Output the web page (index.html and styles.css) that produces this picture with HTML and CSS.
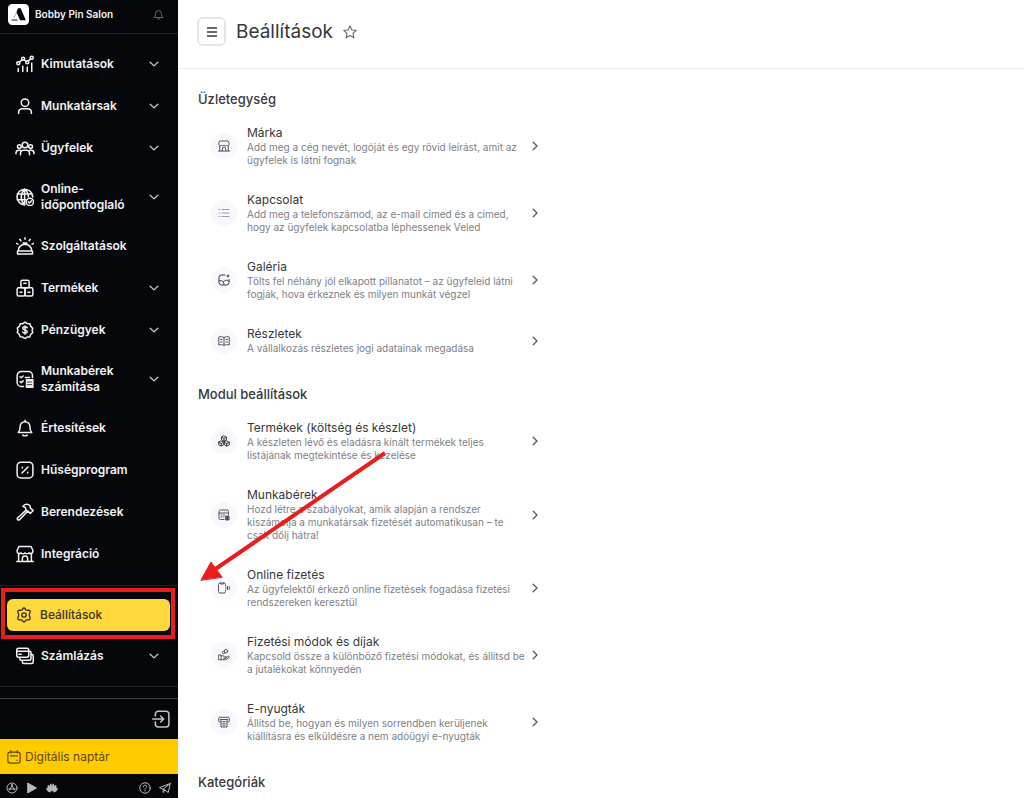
FILE: index.html
```html
<!DOCTYPE html>
<html lang="hu">
<head>
<meta charset="UTF-8">
<meta name="viewport" content="width=device-width, initial-scale=1.0">
<title>Beállítások</title>
<link rel="stylesheet" href="styles.css">
</head>
<body>
<!-- shared shapes -->
<svg class="defs" aria-hidden="true">
  <symbol id="down" viewBox="0 0 10 10"><path d="M1.2 3.2 5 6.9l3.8-3.7"/></symbol>
  <symbol id="right" viewBox="0 0 10 10"><path d="M3.2 1.3 7 5 3.2 8.7"/></symbol>
  <symbol id="shop" viewBox="0 0 24 24"><path d="M4 2h16l2.500 5v2a3.100 3.100 0 0 1-5.200 1.500 3.500 3.500 0 0 1-5.300 0 3.500 3.500 0 0 1-5.300 0A3.100 3.100 0 0 1 1.500 9V7zM3.500 12v10M20.500 12v10M1 22h22M8.500 22v-4a3.500 3.500 0 0 1 7 0v4"/></symbol>
</svg>

<aside class="sidebar">
  <div class="brand">
    <svg class="logo" viewBox="0 0 20 20"><rect width="20" height="20" rx="4" fill="#fff"/><path d="M9.500 4h2.500l5 11.500h-5.500L8 7.500z" fill="#08080c"/><path d="M3.500 14.500h5.500V16H3.500z" fill="#6b6b70"/><path d="M8 8.500 5.500 13" stroke="#b5b5ba"/></svg>
    <span class="brand-name">Bobby Pin Salon</span>
    <button class="bell" aria-label="Értesítések"><svg class="icon" viewBox="0 0 24 24"><path d="M3 18c2-2 2.500-4 2.500-8a6.500 6.500 0 0 1 13 0c0 4 .5 6 2.500 8zM9 21c1.500 1.800 4.500 1.800 6 0"/></svg></button>
  </div>

  <nav class="menu">
    <button class="item">
      <svg class="icon" viewBox="0 0 24 24"><path d="M3 22v-4M9 22v-7M15 22v-6M21 22V11M4.500 9.500l3.500-3M11 6.500l2.500 2M16.500 8l3-3"/><circle cx="3" cy="11" r="2"/><circle cx="9.500" cy="5" r="2"/><circle cx="15" cy="9.500" r="2"/><circle cx="21" cy="3.500" r="2"/></svg>
      <span>Kimutatások</span><svg class="chevron"><use href="#down"/></svg>
    </button>
    <button class="item">
      <svg class="icon" viewBox="0 0 24 24"><circle cx="12" cy="7.500" r="5"/><path d="M3.500 22v-1.500c0-3 2-5 5-5h7c3 0 5 2 5 5V22"/></svg>
      <span>Munkatársak</span><svg class="chevron"><use href="#down"/></svg>
    </button>
    <button class="item">
      <svg class="icon wide" viewBox="0 0 24 24"><circle cx="12" cy="8" r="3.800"/><circle cx="4.500" cy="10" r="2.500"/><circle cx="19.500" cy="10" r="2.500"/><path d="M6 21v-2c0-2.500 1.500-4 4-4h4c2.500 0 4 1.500 4 4v2M0 19.500v-1c0-2 1.500-3.500 4-3.500h1.500M24 19.500v-1c0-2-1.500-3.500-4-3.500h-1.500"/></svg>
      <span>Ügyfelek</span><svg class="chevron"><use href="#down"/></svg>
    </button>
    <button class="item tall">
      <svg class="icon" viewBox="0 0 24 24"><path d="M12 22.500A10.500 10.500 0 1 1 22.300 12M11.500 1.500c-6 6-6 15 0 21M11.500 1.500c3.500 3 5 6.500 5 10.500M1.500 8h20M1.500 15.500H13M11.500 1.500v21"/><circle cx="18.500" cy="18.500" r="4.800"/><path d="m16.500 18.500 1.500 1.500 2.800-3"/></svg>
      <span>Online-időpontfoglaló</span><svg class="chevron"><use href="#down"/></svg>
    </button>
    <a class="item" href="#">
      <svg class="icon" viewBox="0 0 24 24"><path d="M3 18.500a9 9 0 0 1 18 0zM2 19v3.500h20V19M9.500 8h5M12 8v2M12 1v2M5 3l1.500 2M19 3l-1.500 2M.5 8.500l2 1M23.500 8.500l-2 1"/></svg>
      <span>Szolgáltatások</span>
    </a>
    <button class="item">
      <svg class="icon" viewBox="0 0 24 24"><rect x="6.500" y="1.500" width="11" height="10" rx="2"/><rect x="1.500" y="11.500" width="10.500" height="11" rx="2"/><rect x="12" y="11.500" width="10.500" height="11" rx="2"/><path d="M10.500 5.500h3M5.500 17.500H8M16 17.500h2.500"/></svg>
      <span>Termékek</span><svg class="chevron"><use href="#down"/></svg>
    </button>
    <button class="item">
      <svg class="icon" viewBox="0 0 24 24"><path d="m12 1.500 3 2 3.500.3 1.200 3.400 2.600 2.500-.8 2.800.8 3-2.800 2.500-1.200 3.200-3.500.2-2.800 2-3-2-3.500-.3-1.200-3.400-2.600-2.400.8-3-.8-2.800 2.800-2.500 1.200-3.200 3.500-.2z"/><path d="M15 9c-1-1.700-6-1.800-6 .7 0 2.800 6 1.500 6 4.500 0 2.500-5 2.500-6 .5M12 6.500v11"/></svg>
      <span>Pénzügyek</span><svg class="chevron"><use href="#down"/></svg>
    </button>
    <button class="item tall">
      <svg class="icon" viewBox="0 0 24 24"><path d="M10 22H7a5.500 5.500 0 0 1-5.500-5.500v-9A5.500 5.500 0 0 1 7 2h9.500A5.500 5.500 0 0 1 22 7.500V10M5.500 9l1.500 1.300L9.500 8M5.500 15.500 7 16.800l2.500-2.300M12.500 10H18"/><path d="M14 13h8.500v10H14z" fill="currentColor"/><path class="cut" d="M15 16h6M15 19.500h6"/></svg>
      <span>Munkabérek számítása</span><svg class="chevron"><use href="#down"/></svg>
    </button>
    <a class="item" href="#">
      <svg class="icon" viewBox="0 0 24 24"><path d="M3 18c2-2 2.500-4 2.500-8a6.500 6.500 0 0 1 13 0c0 4 .5 6 2.500 8zM9 21.500c1.500 1.300 4.500 1.300 6 0M12 1.500v2"/></svg>
      <span>Értesítések</span>
    </a>
    <a class="item" href="#">
      <svg class="icon" viewBox="0 0 24 24"><rect x="1.500" y="1.500" width="21" height="21" rx="5"/><path d="m8 16 8-8M8.500 8.200v1M15.500 15v1"/></svg>
      <span>Hűségprogram</span>
    </a>
    <a class="item" href="#">
      <svg class="icon" viewBox="0 0 24 24"><path d="M13.500 9.500 2 20c-1 1.500.8 3.500 2.500 2.500L15.500 11M9 4.500c3-3.500 7-3.500 9.500-1l.5 3 4 3.500-4 4-3.500-3.500-2-1-1-3.500z"/></svg>
      <span>Berendezések</span>
    </a>
    <a class="item" href="#">
      <svg class="icon"><use href="#shop"/></svg>
      <span>Integráció</span>
    </a>
  </nav>

  <nav class="menu-bottom">
    <div class="highlight">
      <a class="item active" href="#" aria-current="page">
        <svg class="icon" viewBox="0 0 24 24"><path d="M12 1.500c2 0 2 2.500 4 3.300 1.800.6 3.800-.8 5 .9 1.200 2-1 3.500-1 6.300s2.200 4.300 1 6.300c-1.200 1.700-3.200.3-5 .9-2 .8-2 3.300-4 3.300s-2-2.500-4-3.300c-1.800-.6-3.800.8-5-.9-1.200-2 1-3.500 1-6.300s-2.200-4.300-1-6.300c1.200-1.700 3.200-.3 5-.9 2-.8 2-3.300 4-3.300z"/><circle cx="12" cy="12" r="3.300"/></svg>
        <span>Beállítások</span>
      </a>
    </div>
    <button class="item short">
      <svg class="icon" viewBox="0 0 24 24"><rect x="1" y="1.500" width="16" height="12" rx="2.500"/><path d="M1 5.500h16M4 9.500h3M5 14v1.500a2 2 0 0 0 2 2h11a2 2 0 0 0 2-2v-8a2 2 0 0 0-2-2M8.500 18v2a2 2 0 0 0 2 2H21a2 2 0 0 0 2-2v-8a2 2 0 0 0-2-2"/></svg>
      <span>Számlázás</span><svg class="chevron"><use href="#down"/></svg>
    </button>
  </nav>

  <div class="logout">
    <button aria-label="Kijelentkezés"><svg class="icon" viewBox="0 0 24 24"><path d="M4.500 8V5.500a4 4 0 0 1 4-4h10a4 4 0 0 1 4 4v13a4 4 0 0 1-4 4h-10a4 4 0 0 1-4-4V16M1 12h14M11.500 8l4 4-4 4"/></svg></button>
  </div>

  <a class="calendar" href="#">
    <svg class="icon" viewBox="0 0 24 24"><rect x="1.500" y="3.500" width="21" height="19" rx="4"/><path d="M6.500 1v4M17.500 1v4M6 10h12M17 17.500h1"/></svg>
    <span>Digitális naptár</span>
  </a>

  <div class="links">
    <a href="#" aria-label="App Store"><svg class="icon" viewBox="0 0 24 24"><circle cx="12" cy="12" r="10"/><path d="m13 5-6 11M11 5l6 11M5.500 14h13"/></svg></a>
    <a href="#" aria-label="Google Play"><svg class="icon" viewBox="0 0 24 24"><path d="M4 2.500 21 12 4 21.500z" fill="currentColor"/></svg></a>
    <a href="#" aria-label="AppGallery"><svg class="icon" viewBox="0 0 24 24"><path fill="currentColor" stroke="none" d="M11.700 19C7 14 6 6 9.500 3c3 1 3 9 2.200 16zM12.300 19C17 14 18 6 14.500 3c-3 1-3 9-2.200 16zM10.500 19.500C4 16 1.500 10 4 5.500 8 7 9.500 13 10.500 19.500zM13.500 19.500c6.500-3.500 9-9.500 6.500-14-4 1.500-5.500 7.500-6.500 14zM9.500 20.500c-5 1-9-3-9-9 4 0 7 4 9 9zM14.500 20.500c5 1 9-3 9-9-4 0-7 4-9 9z"/></svg></a>
    <a class="help" href="#" aria-label="Súgó"><svg class="icon" viewBox="0 0 24 24"><circle cx="12" cy="12" r="10.500"/><path d="M8.500 9.500c0-4.500 7-4 7-.3 0 2.300-3.500 2.300-3.500 5M12 17v1"/></svg></a>
    <a href="#" aria-label="Telegram"><svg class="icon" viewBox="0 0 24 24"><path d="M1.500 11 22.500 3l-4 18-7-5zM22.500 3l-14 11v7l3-5"/></svg></a>
  </div>
</aside>

<main class="content">
  <header class="topbar">
    <button class="burger" aria-label="Menü"><svg class="icon" viewBox="0 0 12 12"><path d="M1 2h10M1 6h10M1 10h10"/></svg></button>
    <h1>Beállítások</h1>
    <button class="star" aria-label="Kedvencekhez"><svg class="icon" viewBox="0 0 24 24"><path d="m12 1.500 3.200 7 7.500.8-5.600 5.100 1.600 7.600-6.700-3.900L5.300 22l1.600-7.600L1.300 9.300l7.500-.8z"/></svg></button>
  </header>

  <section class="group">
    <h2>Üzletegység</h2>
    <a class="row" href="#">
      <span class="round"><svg class="icon"><use href="#shop"/></svg></span>
      <span class="text"><strong>Márka</strong><small>Add meg a cég nevét, logóját és egy rövid leírást, amit az ügyfelek is látni fognak</small></span>
      <svg class="chevron"><use href="#right"/></svg>
    </a>
    <a class="row" href="#">
      <span class="round"><svg class="icon light" viewBox="0 0 24 24"><path d="M2 5h2M2 12h2M2 19h2M8 5h14M8 12h14M8 19h14"/></svg></span>
      <span class="text"><strong>Kapcsolat</strong><small>Add meg a telefonszámod, az e-mail címed és a címed, hogy az ügyfelek kapcsolatba léphessenek Veled</small></span>
      <svg class="chevron"><use href="#right"/></svg>
    </a>
    <a class="row" href="#">
      <span class="round"><svg class="icon bold" viewBox="0 0 24 24"><path d="M14 2H7a5 5 0 0 0-5 5v10a5 5 0 0 0 5 5h10a5 5 0 0 0 5-5v-6M2 14c5-3 9 0 10 7M11 16c2-4 7-5 11-2M20 2v4M18 4h4"/></svg></span>
      <span class="text"><strong>Galéria</strong><small>Tölts fel néhány jól elkapott pillanatot – az ügyfeleid látni fogják, hova érkeznek és milyen munkát végzel</small></span>
      <svg class="chevron"><use href="#right"/></svg>
    </a>
    <a class="row" href="#">
      <span class="round"><svg class="icon" viewBox="0 0 24 24"><path d="M12 5C9 3 5 3 1.500 4v16c3.500-1 7.500-1 10.500 1 3-2 7-2 10.500-1V4C19 3 15 3 12 5zM12 5v16M5 9h3M5 14h3M16 9h3M16 14h3"/></svg></span>
      <span class="text"><strong>Részletek</strong><small>A vállalkozás részletes jogi adatainak megadása</small></span>
      <svg class="chevron"><use href="#right"/></svg>
    </a>
  </section>

  <section class="group">
    <h2>Modul beállítások</h2>
    <a class="row" href="#">
      <span class="round"><svg class="icon bold" viewBox="0 0 24 24"><path d="m12 2 5 2.500v5L12 12 7 9.500v-5zM6.500 12l5 2.500v5l-5 2.500-5-2.500v-5zM17.500 12l5 2.500v5l-5 2.500-5-2.500v-5zM7 4.500l5 2.500 5-2.500M12 7v5M1.500 14.500l5 2.500 5-2.500M6.500 17v5M12.500 14.500l5 2.500 5-2.500M17.500 17v5"/></svg></span>
      <span class="text"><strong>Termékek (költség és készlet)</strong><small>A készleten lévő és eladásra kínált termékek teljes listájának megtekintése és kezelése</small></span>
      <svg class="chevron"><use href="#right"/></svg>
    </a>
    <a class="row" href="#">
      <span class="round"><svg class="icon" viewBox="0 0 24 24"><path d="M12 21H5a3 3 0 0 1-3-3V5a3 3 0 0 1 3-3h13a3 3 0 0 1 3 3v6M2 8h19M6 12h2M11 12h2M6 16h2M11 16h1"/><path d="M16 14h6v8h-6z" fill="currentColor"/></svg></span>
      <span class="text"><strong>Munkabérek</strong><small>Hozd létre a szabályokat, amik alapján a rendszer kiszámolja a munkatársak fizetését automatikusan – te csak dőlj hátra!</small></span>
      <svg class="chevron"><use href="#right"/></svg>
    </a>
    <a class="row" href="#">
      <span class="round"><svg class="icon" viewBox="0 0 24 24"><path d="M15 8V5a3 3 0 0 0-3-3H4a3 3 0 0 0-3 3v14a3 3 0 0 0 3 3h8a3 3 0 0 0 3-3v-3M5 2v2h6V2"/><path d="M15 12h4M19 9v6M22.500 9v6"/></svg></span>
      <span class="text"><strong>Online fizetés</strong><small>Az ügyfelektől érkező online fizetések fogadása fizetési rendszereken keresztül</small></span>
      <svg class="chevron"><use href="#right"/></svg>
    </a>
    <a class="row" href="#">
      <span class="round"><svg class="icon" viewBox="0 0 24 24"><circle cx="16" cy="4.500" r="3.500"/><circle cx="11" cy="7" r="2.500"/><path d="M1.500 12H6v9.500H1.500zM6 13.500h4l3 2h3v3h-5M16 17l5-2.500c2 0 2 2 .5 3L15 21.500H6"/></svg></span>
      <span class="text"><strong>Fizetési módok és díjak</strong><small>Kapcsold össze a különböző fizetési módokat, és állítsd be a jutalékokat könnyedén</small></span>
      <svg class="chevron"><use href="#right"/></svg>
    </a>
    <a class="row" href="#">
      <span class="round"><svg class="icon" viewBox="0 0 24 24"><path d="M5 12H3.500a2 2 0 0 1-2-2V4.500a2 2 0 0 1 2-2h17a2 2 0 0 1 2 2V10a2 2 0 0 1-2 2H19M4.500 7h15M6 7v15h12V7M9.500 11h5M9.500 14.500h5M9.500 18h5"/></svg></span>
      <span class="text"><strong>E-nyugták</strong><small>Állítsd be, hogyan és milyen sorrendben kerüljenek kiállításra és elküldésre a nem adóügyi e-nyugták</small></span>
      <svg class="chevron"><use href="#right"/></svg>
    </a>
  </section>

  <section class="group">
    <h2>Kategóriák</h2>
  </section>

  <!-- arrow pointing at the settings menu item -->
  <svg class="arrow" viewBox="0 0 190 134" aria-hidden="true"><path d="M187 4 16 121" stroke="#e81e1e" stroke-width="4" stroke-linecap="butt"/><path d="m3 131 10-18 11 15z" fill="#e81e1e" stroke="#e81e1e"/></svg>
</main>
</body>
</html>
```

FILE: styles.css
```css
* {
  box-sizing: border-box;
}
body {
  margin: 0;
  min-height: 100vh;
  display: flex;
  font-family: Inter, "Liberation Sans", sans-serif;
  background-color: #ffffff;
  color: #36383c;
}
a {
  color: inherit;
  text-decoration: none;
}
button {
  padding: 0;
  border: none;
  background: none;
  color: inherit;
  font: inherit;
  text-align: left;
  cursor: pointer;
}
svg {
  display: block;
  flex: none;
  fill: none;
  stroke: currentColor;
  stroke-linecap: round;
  stroke-linejoin: round;
}
.defs {
  display: none;
}
.icon {
  width: 18px;
  height: 18px;
  stroke-width: 2;
}
.chevron {
  width: 10px;
  height: 10px;
  stroke-width: 1.3;
}

/* sidebar */
.sidebar {
  flex: none;
  width: 178px;
  display: flex;
  flex-direction: column;
  background-color: #06070b;
  color: #f2f2f4;
}
.brand {
  display: flex;
  align-items: center;
  height: 34px;
  padding: 0 14px 5px 8px;
  border-bottom: 1px solid #202126;
}
.logo {
  width: 21px;
  height: 21px;
  stroke: none;
}
.brand-name {
  flex: 1;
  margin-left: 6px;
  font-size: 10px;
  font-weight: 600;
}
.bell {
  color: #73747a;
}
.bell .icon {
  width: 11px;
  height: 11px;
}
.menu {
  padding: 9px 0 10px;
  border-bottom: 1px solid #202126;
}
.item {
  display: flex;
  align-items: center;
  gap: 7px;
  width: 100%;
  height: 42px;
  padding: 0 19px 0 16px;
  font-size: 12px;
  font-weight: 600;
  line-height: 16px;
}
.item span {
  flex: 1;
}
.item .chevron {
  color: #c9cace;
}
.tall {
  height: 56px;
}
.wide {
  overflow: visible;
}
.cut {
  stroke: #06070b;
  stroke-width: 1;
}
.menu-bottom {
  padding: 2px 0 13px;
  border-bottom: 1px solid #202126;
}
.highlight {
  margin: 0 3px 0 1px;
  padding: 7px 1px 4px 2px;
  border: 4px solid #e81e1e;
}
.active {
  height: 32px;
  padding: 0 9px;
  gap: 8px;
  border-radius: 6px;
  background-color: #ffd83d;
  color: #3a3420;
  font-weight: 500;
}
.active .icon {
  width: 16px;
  height: 16px;
}
.short {
  height: 34px;
}
.logout {
  flex: 1;
  display: flex;
  justify-content: flex-end;
  align-items: center;
  min-height: 40px;
  margin-top: 11px;
  padding-right: 8px;
  border-top: 1px solid #3c3d42;
  color: #c4c5ca;
}
.calendar {
  display: flex;
  align-items: center;
  gap: 4px;
  height: 35px;
  padding-left: 7px;
  background-color: #ffca00;
  color: #5c4b0b;
  font-size: 12px;
}
.calendar .icon {
  width: 14px;
  height: 14px;
}
.links {
  display: flex;
  align-items: center;
  gap: 8px;
  height: 24px;
  padding: 4px 7px 0 6px;
  color: #b9babe;
}
.links .icon {
  width: 12px;
  height: 12px;
}
.help {
  margin-left: auto;
}

/* page */
.content {
  flex: 1;
  position: relative;
  min-width: 0;
}
.topbar {
  display: flex;
  align-items: center;
  height: 69px;
  padding: 0 19px 5px;
  border-bottom: 1px solid #ebecef;
}
.burger {
  display: flex;
  justify-content: center;
  align-items: center;
  width: 29px;
  height: 29px;
  border: 2px solid #e4e4ee;
  border-radius: 6px;
}
.burger .icon {
  width: 12px;
  height: 12px;
  stroke-width: 1.5;
  stroke-linecap: butt;
}
h1 {
  margin: 0 10px;
  font-size: 19px;
  font-weight: 400;
  line-height: 24px;
}
.star {
  color: #6b6d73;
}
.star .icon {
  width: 14px;
  height: 14px;
}
.group {
  padding: 0 20px;
}
.group:first-of-type {
  padding-top: 4px;
}
h2 {
  margin: 0;
  padding: 17px 0 5px;
  font-size: 13px;
  font-weight: 500;
  line-height: 18px;
}
.row {
  display: flex;
  align-items: center;
  max-width: 342px;
  margin-left: 13px;
  padding: 12px 13px 13px 0;
}
.round {
  flex: none;
  display: flex;
  justify-content: center;
  align-items: center;
  width: 26px;
  height: 26px;
  border-radius: 50%;
  background-color: #f7f8fd;
  color: #55575c;
}
.round .icon {
  width: 12px;
  height: 12px;
}
.round .light {
  color: #a09ea8;
}
.round .bold {
  color: #36383c;
}
.text {
  flex: 1;
  margin: 0 3px 0 10px;
}
.text strong {
  display: block;
  font-size: 12px;
  font-weight: 400;
  line-height: 16px;
}
.text small {
  display: block;
  color: #7d8087;
  font-size: 10px;
  line-height: 13px;
}
.row .chevron {
  color: #55575c;
}
.arrow {
  position: absolute;
  left: 20px;
  top: 449px;
  width: 190px;
  height: 134px;
  pointer-events: none;
}
```
